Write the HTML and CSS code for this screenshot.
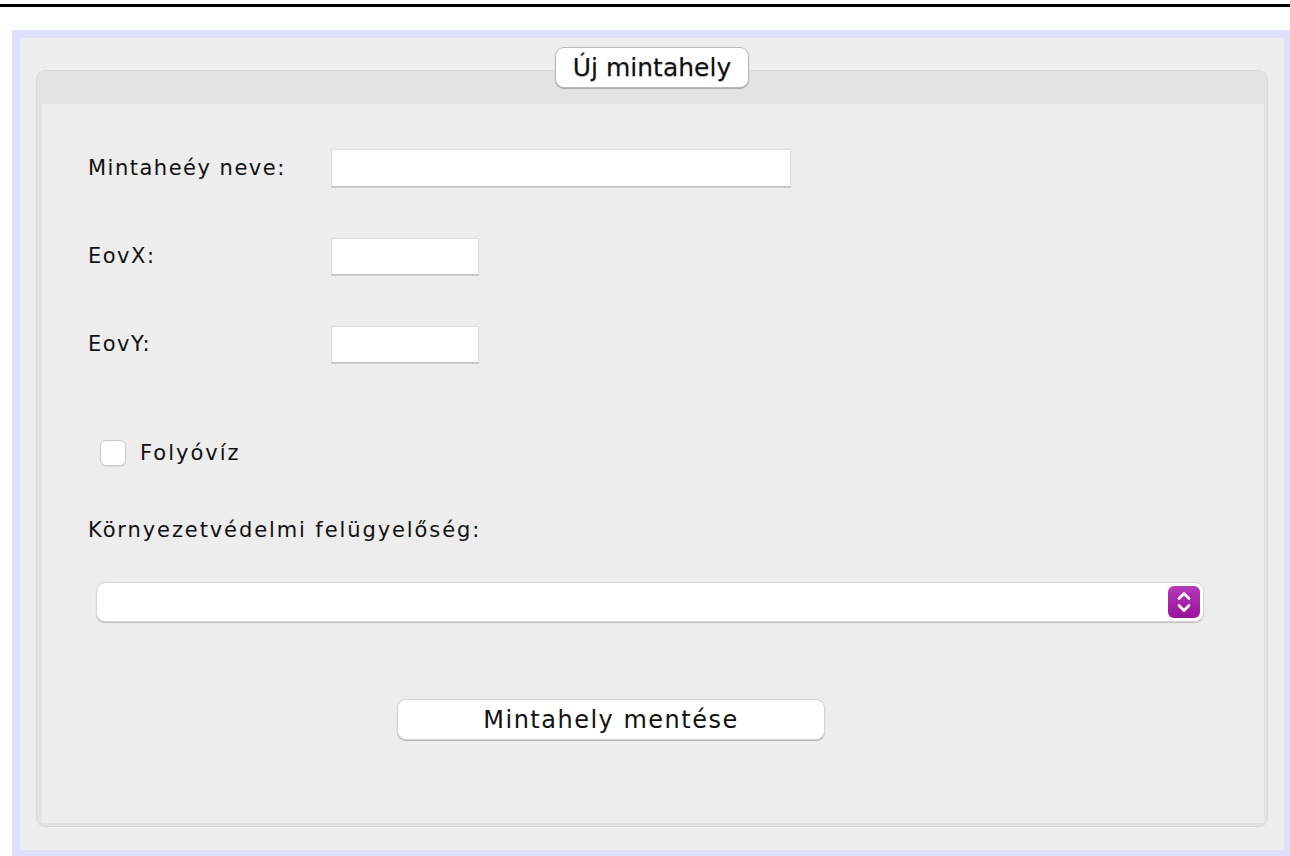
FILE: index.html
```html
<!DOCTYPE html>
<html lang="hu">
<head>
<meta charset="utf-8">
<title>Új mintahely</title>
<link rel="stylesheet" href="styles.css">
</head>
<body>
<div class="topline"></div>
<div class="frame">
  <div class="panel">
    <div class="title-btn">Új mintahely</div>
    <div class="content">
      <div class="row row-first">
        <label class="lbl">Mintaheéy neve:</label>
        <input class="field field-wide" type="text">
      </div>
      <div class="row">
        <label class="lbl">EovX:</label>
        <input class="field field-short" type="text">
      </div>
      <div class="row">
        <label class="lbl">EovY:</label>
        <input class="field field-short" type="text">
      </div>
      <div class="check-row">
        <span class="checkbox"></span>
        <span class="check-text">Folyóvíz</span>
      </div>
      <div class="section-label">Környezetvédelmi felügyelőség:</div>
      <div class="select">
        <span class="select-arrows">
          <svg width="32" height="32" viewBox="0 0 32 32">
            <path d="M11 12.5 L16 7.5 L21 12.5" fill="none" stroke="#fff" stroke-width="2.6" stroke-linecap="round" stroke-linejoin="round"/>
            <path d="M11 19.5 L16 24.5 L21 19.5" fill="none" stroke="#fff" stroke-width="2.6" stroke-linecap="round" stroke-linejoin="round"/>
          </svg>
        </span>
      </div>
      <div class="save-wrap">
        <div class="save-btn">Mintahely mentése</div>
      </div>
    </div>
  </div>
</div>
</body>
</html>
```

FILE: styles.css
```css
html, body {
  margin: 0;
  padding: 0;
  background: #ffffff;
  overflow: hidden;
  width: 1290px;
  height: 856px;
}

body {
  font-family: "DejaVu Sans", "Liberation Sans", sans-serif;
  color: #111;
}

.topline {
  height: 3px;
  margin-top: 4px;
  background: #000;
}

.frame {
  margin: 23px 0 0 12px;
  width: 1232px;
  height: 757px;
  border: 8px solid #dfdffe;
  background: #ededed;
  padding: 32px 16px 23px 16px;
  box-sizing: content-box;
}

.panel {
  position: relative;
  height: 100%;
  box-sizing: border-box;
  background: #e3e3e3;
  border: 1px solid #d9d9d9;
  border-radius: 9px;
  padding: 33px 3px 3px 5px;
}

.title-btn {
  position: absolute;
  left: 50%;
  top: -24px;
  transform: translateX(-50%);
  width: 194px;
  height: 41px;
  box-sizing: border-box;
  background: #fff;
  border: 1px solid #b9b9b9;
  border-radius: 9px;
  box-shadow: 0 1px 1px rgba(0,0,0,0.25);
  display: flex;
  align-items: center;
  justify-content: center;
  font-size: 25px;
  color: #111;
  text-shadow: 0 1px 1px rgba(0,0,0,0.3);
}

.content {
  height: 100%;
  background: #ededed;
  display: flex;
  flex-direction: column;
  padding-left: 46px;
  box-sizing: border-box;
}

.row {
  display: flex;
  align-items: center;
  height: 38px;
  margin-top: 50px;
}

.row-first {
  margin-top: 45px;
}

.lbl {
  width: 243px;
  font-size: 21px;
  letter-spacing: 1.5px;
}

.field {
  height: 37px;
  box-sizing: border-box;
  border: 1px solid #dcdcdc;
  border-bottom-color: #c2c2c2;
  background: #fff;
  box-shadow: 0 1px 0 #cfcfcf;
  padding: 0;
  margin: 0;
  outline: none;
}

.field-wide {
  width: 460px;
  height: 38px;
}

.field-short {
  width: 148px;
}

.check-row {
  display: flex;
  align-items: center;
  margin-top: 76px;
  margin-left: 12px;
  height: 27px;
}

.checkbox {
  width: 26px;
  height: 26px;
  box-sizing: border-box;
  border: 1px solid #cbcbcb;
  border-radius: 6px;
  background: #fff;
  box-shadow: 0 1px 1px rgba(0,0,0,0.08);
}

.check-text {
  margin-left: 14px;
  font-size: 21px;
  letter-spacing: 2px;
}

.section-label {
  margin-top: 51px;
  height: 26px;
  line-height: 26px;
  font-size: 21px;
  letter-spacing: 1.9px;
}

.select {
  margin-top: 39px;
  margin-left: 8px;
  width: 1108px;
  height: 40px;
  box-sizing: border-box;
  background: #fff;
  border: 1px solid #d6d6d6;
  border-radius: 9px;
  box-shadow: 0 1px 1px rgba(0,0,0,0.2);
  display: flex;
  align-items: center;
  justify-content: flex-end;
  padding-right: 3px;
}

.select-arrows {
  width: 32px;
  height: 32px;
  border-radius: 6px;
  background: linear-gradient(#b53bb8, #9a119c);
  display: flex;
}

.save-wrap {
  margin-top: 77px;
  margin-left: 309px;
}

.save-btn {
  width: 428px;
  height: 41px;
  box-sizing: border-box;
  background: #fff;
  border: 1px solid #d4d4d4;
  border-radius: 9px;
  box-shadow: 0 1px 1px rgba(0,0,0,0.25);
  display: flex;
  align-items: center;
  justify-content: center;
  font-size: 24px;
  letter-spacing: 1.5px;
  color: #111;
}
```
